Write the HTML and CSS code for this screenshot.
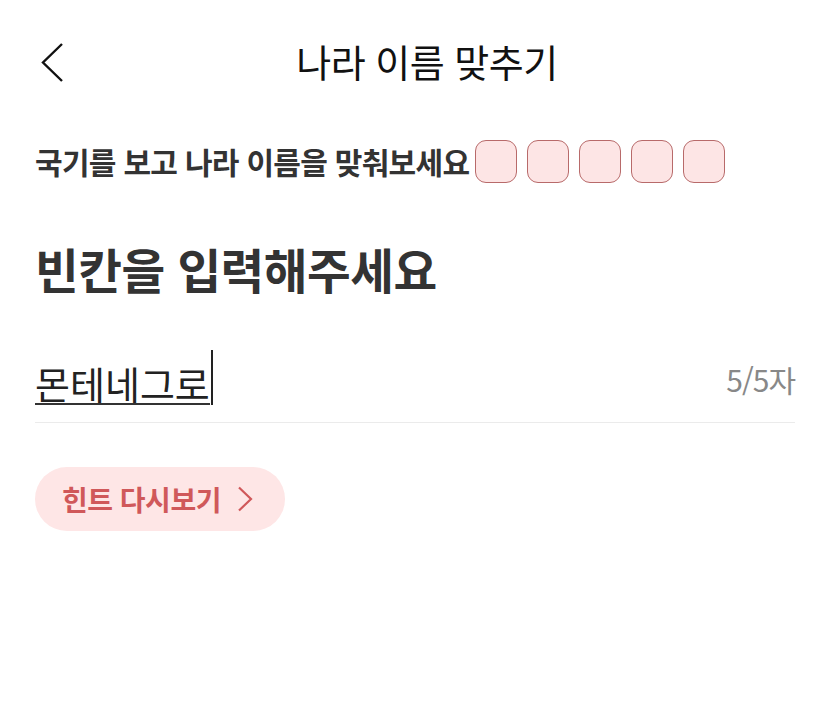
FILE: index.html
```html
<!DOCTYPE html>
<html lang="ko">
<head>
<meta charset="utf-8">
<link rel="stylesheet" href="styles.css">
</head>
<body>
<div class="page">
  <header class="topbar">
    <button class="back" aria-label="뒤로">
      <svg width="24" height="40" viewBox="0 0 24 40"><path d="M21 1 L2 19.5 L21 38" fill="none" stroke="#111" stroke-width="2.4" stroke-linejoin="miter"/></svg>
    </button>
    <h1 class="title">나라 이름 맞추기</h1>
  </header>

  <div class="prompt">
    <span class="prompt-text">국기를 보고 나라 이름을 맞춰보세요</span>
    <div class="slots">
      <span class="slot"></span><span class="slot"></span><span class="slot"></span><span class="slot"></span><span class="slot"></span>
    </div>
  </div>

  <h2 class="heading">빈칸을 입력해주세요</h2>

  <div class="field">
    <span class="value"><span class="composed">몬테네그로</span><span class="caret"></span></span>
    <span class="count">5/5자</span>
  </div>

  <button class="hint">
    <span>힌트 다시보기</span>
    <svg width="16" height="26" viewBox="0 0 16 26"><path d="M2 1.5 L14 13 L2 24.5" fill="none" stroke="#d0585a" stroke-width="2.2"/></svg>
  </button>
</div>
</body>
</html>
```

FILE: styles.css
```css
* { box-sizing: border-box; }
html, body { margin: 0; padding: 0; background: #fff; }
body {
  font-family: "Noto Sans CJK KR", "Noto Sans", sans-serif;
  color: #222;
}
.page {
  width: 830px;
  padding: 0 35px;
}
.topbar {
  position: relative;
  height: 126px;
  display: flex;
  align-items: center;
  justify-content: center;
  padding-left: 24px;
  padding-bottom: 2px;
}
.back {
  position: absolute;
  left: 6px;
  top: 43px;
  padding: 0;
  border: 0;
  background: none;
  display: flex;
}
.title {
  margin: 0;
  margin-top: -3px;
  font-size: 38px;
  font-weight: 400;
  color: #111;
  letter-spacing: -0.5px;
  line-height: 1;
}
.prompt {
  display: flex;
  align-items: center;
  height: 46px;
  margin-top: 12px;
}
.prompt-text {
  font-size: 30px;
  font-weight: 700;
  color: #333;
  letter-spacing: -0.7px;
  line-height: 1;
}
.slots {
  display: flex;
  gap: 10px;
  margin-left: 6px;
}
.slot {
  width: 42px;
  height: 43px;
  border: 1.6px solid #b86a6a;
  border-radius: 11px;
  background: #fde5e5;
}
.heading {
  margin: 61px 0 0;
  font-size: 47.5px;
  font-weight: 700;
  color: #333;
  letter-spacing: -0.5px;
  line-height: 1;
}
.field {
  display: flex;
  align-items: flex-end;
  justify-content: space-between;
  height: 130px;
  border-bottom: 1px solid #ebebeb;
  padding-bottom: 17px;
}
.value {
  display: flex;
  align-items: flex-end;
}
.composed {
  font-size: 38px;
  color: #222;
  line-height: 1;
  padding-bottom: 1px;
  border-bottom: 2px solid #333;
}
.caret {
  width: 2px;
  height: 55px;
  background: #222;
  margin-left: 1px;
}
.count {
  font-size: 30px;
  color: #888;
  line-height: 1;
  padding-bottom: 11px;
  letter-spacing: -1px;
}
.hint {
  margin-top: 44px;
  height: 64px;
  width: 250px;
  border: 0;
  border-radius: 32px;
  background: #fee6e6;
  display: flex;
  align-items: center;
  padding: 0 0 0 27px;
  gap: 16px;
  font-family: inherit;
  font-size: 28px;
  font-weight: 700;
  color: #d0585a;
  letter-spacing: -0.5px;
}
```
